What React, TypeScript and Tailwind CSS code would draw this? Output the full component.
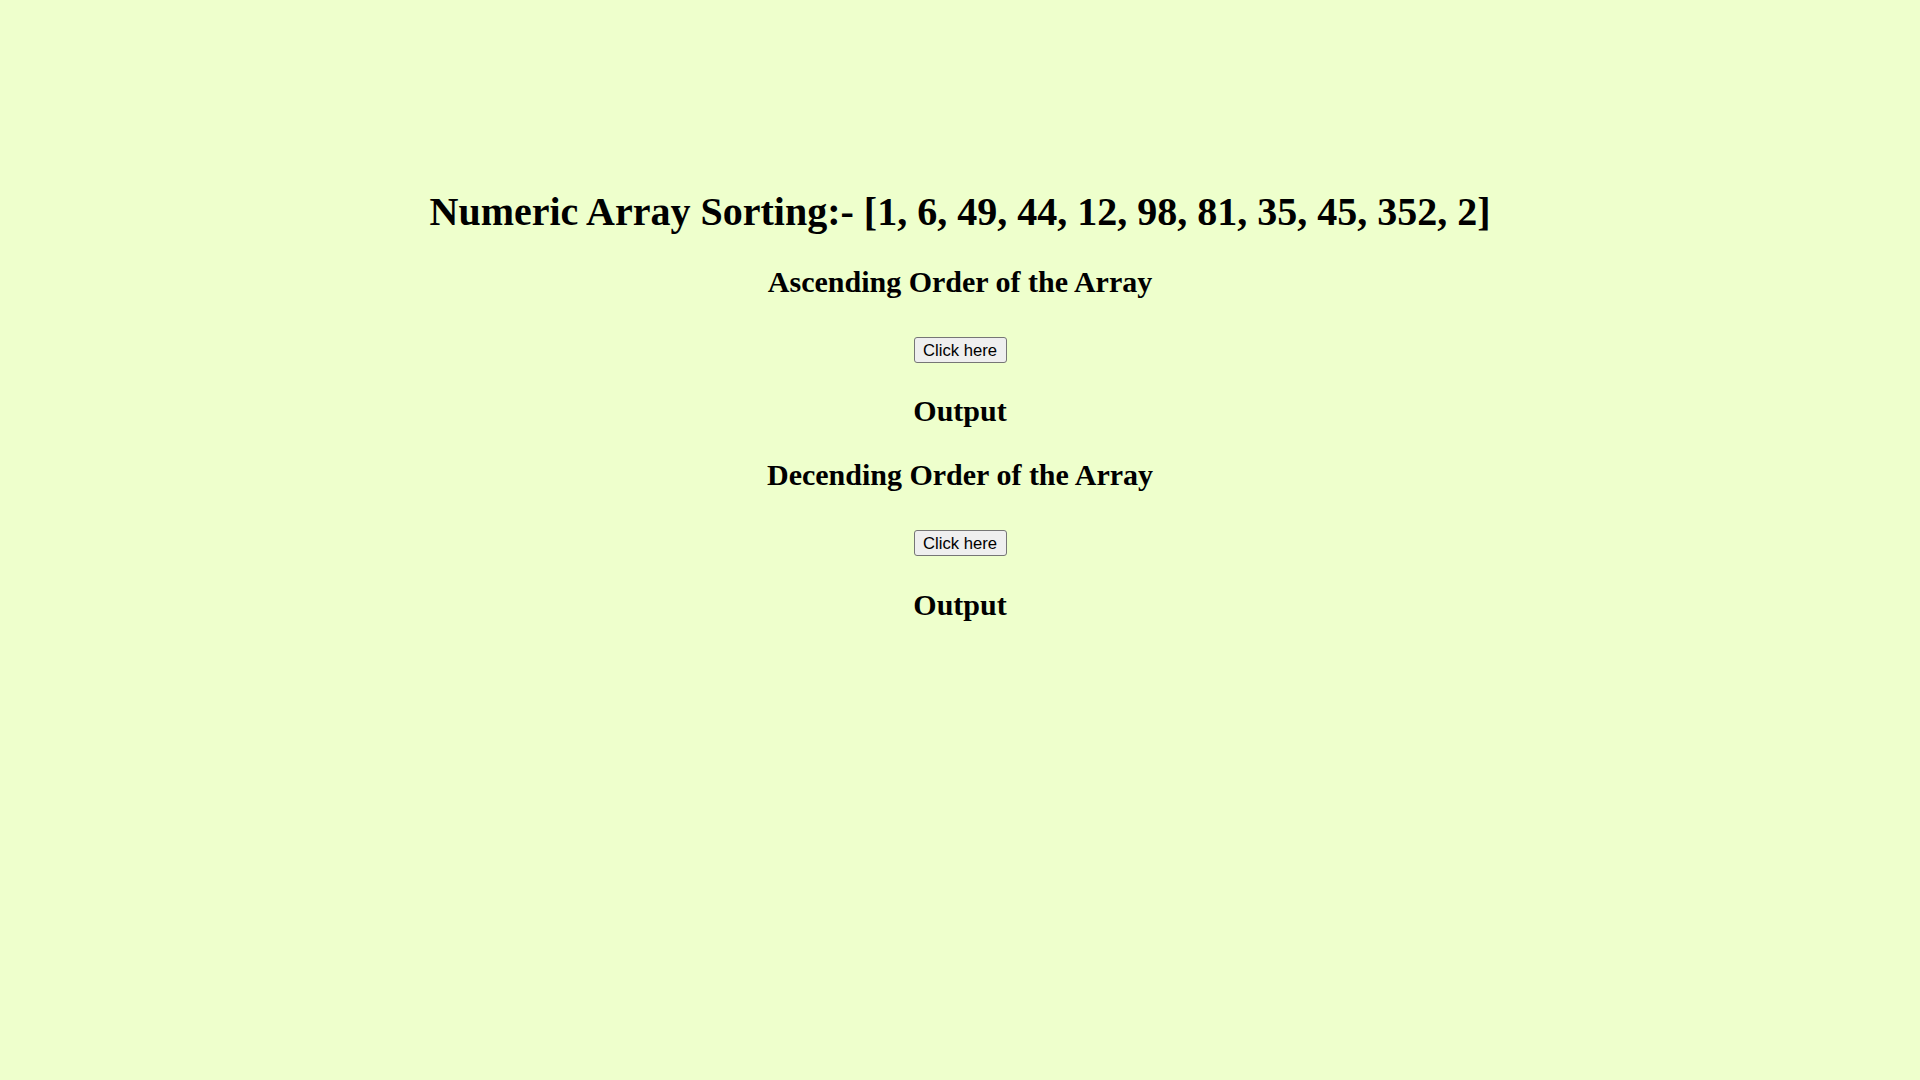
const serif = { fontFamily: '"Liberation Serif", "Times New Roman", serif' };

function SortBlock({ title, outGap }: { title: string; outGap: string }) {
  return (
    <>
      <h2 className="text-[30px] leading-[35px] font-bold text-black mt-[29px]">{title}</h2>
      <button
        type="button"
        className="mt-[38px] h-[26px] w-[93px] pt-[2px] bg-[#efefef] border border-[#767676] rounded-[3px] text-[16.67px] leading-none text-black font-['Liberation_Sans',Arial,sans-serif]"
      >
        Click here
      </button>
      <h2 className={`text-[30px] leading-[35px] font-bold text-black ${outGap}`}>Output</h2>
    </>
  );
}

export default function App() {
  return (
    <div className="min-h-screen w-full bg-[#eeffcc] flex flex-col items-center pt-[189px]" style={serif}>
      <h1 className="text-[40px] leading-[46px] font-bold text-black">
        Numeric Array Sorting:- [1, 6, 49, 44, 12, 98, 81, 35, 45, 352, 2]
      </h1>
      <SortBlock title="Ascending Order of the Array" outGap="mt-[30px]" />
      <SortBlock title="Decending Order of the Array" outGap="mt-[31px]" />
    </div>
  );
}
